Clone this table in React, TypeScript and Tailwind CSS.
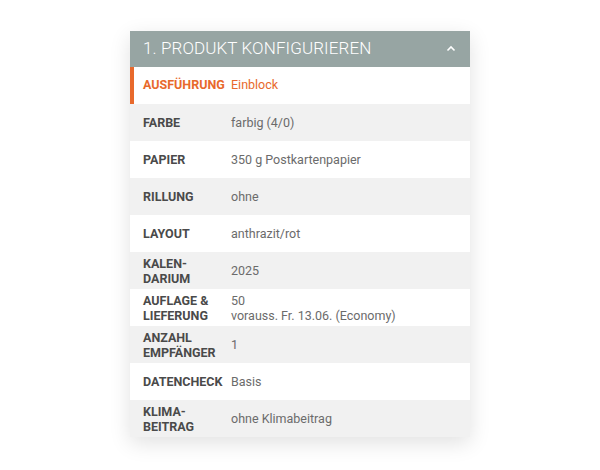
import React from "react"

const rows: { label: string[]; value: string[] }[] = [
  { label: ["FARBE"], value: ["farbig (4/0)"] },
  { label: ["PAPIER"], value: ["350 g Postkartenpapier"] },
  { label: ["RILLUNG"], value: ["ohne"] },
  { label: ["LAYOUT"], value: ["anthrazit/rot"] },
  { label: ["KALEN-", "DARIUM"], value: ["2025"] },
  { label: ["AUFLAGE &", "LIEFERUNG"], value: ["50", "vorauss. Fr. 13.06. (Economy)"] },
  { label: ["ANZAHL", "EMPFÄNGER"], value: ["1"] },
  { label: ["DATENCHECK"], value: ["Basis"] },
  { label: ["KLIMA-", "BEITRAG"], value: ["ohne Klimabeitrag"] },
]

const App = () => {
  return (
    <div className="w-[600px] h-[470px] bg-white pt-[31px] pl-[130px] font-['Roboto',sans-serif]">
      <div className="w-[340px] bg-[#f1f1f1] shadow-[0_6px_20px_rgba(0,0,0,0.12)]">
        <div className="h-[36px] bg-[#97a5a3] flex items-center justify-between pl-[13px] pr-[14px]">
          <h1 className="text-white text-[17px] font-light tracking-[0.1px]">
            1. PRODUKT KONFIGURIEREN
          </h1>
          <svg width="10" height="7" viewBox="0 0 10 7" className="mt-[-2px]">
            <path d="M1.5 5.5 L5 2 L8.5 5.5" fill="none" stroke="white" strokeWidth="1.6" />
          </svg>
        </div>
        <div className="h-[37px] bg-white flex items-center border-l-4 border-[#e8692c] pl-[9px]">
          <span className="w-[88px] shrink-0 text-[12.5px] font-bold text-[#e8692c]">AUSFÜHRUNG</span>
          <span className="text-[12.5px] text-[#e8692c]">Einblock</span>
        </div>
        {rows.map((r, i) => (
          <div
            key={i}
            className={`h-[37px] flex items-center pl-[13px] ${i % 2 === 0 ? "bg-[#f1f1f1]" : "bg-white"}`}
          >
            <div className="w-[88px] shrink-0 text-[12.5px] leading-[15px] font-bold text-[#4a4a4a]">
              {r.label.map((l) => (
                <div key={l}>{l}</div>
              ))}
            </div>
            <div className="text-[12.5px] leading-[15px] text-[#6b6b6b]">
              {r.value.map((v) => (
                <div key={v}>{v}</div>
              ))}
            </div>
          </div>
        ))}
      </div>
    </div>
  )
}

export default App
